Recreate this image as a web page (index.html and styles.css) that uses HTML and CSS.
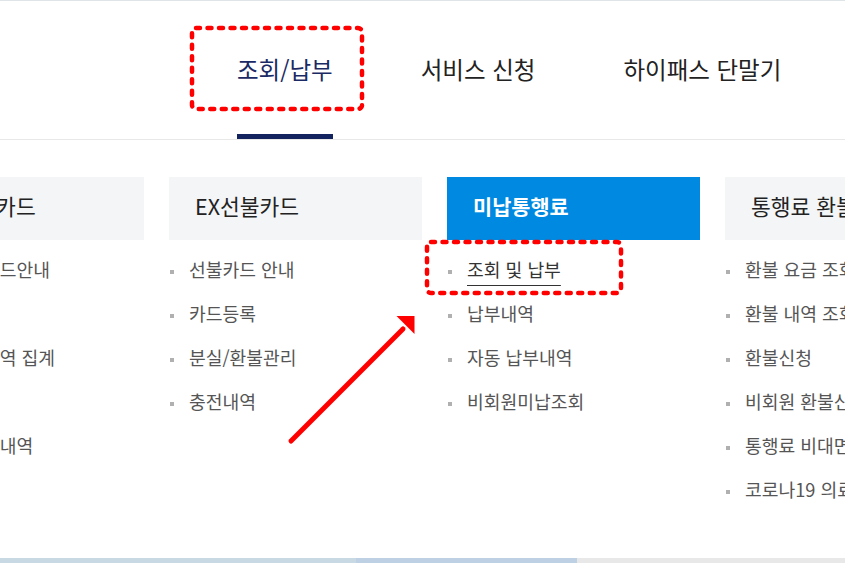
FILE: index.html
```html
<!DOCTYPE html>
<html lang="ko">
<head>
<meta charset="UTF-8">
<title>조회/납부</title>
<link rel="stylesheet" href="styles.css">
</head>
<body>
<div class="page">

	<div class="gnb">
		<ul class="gnb-menu">
			<li class="on"><a href="#">조회/납부</a></li>
			<li><a href="#">서비스 신청</a></li>
			<li><a href="#">하이패스 단말기</a></li>
		</ul>
	</div>

	<div class="sub-menu">
		<div class="col">
			<h3 class="col-title">하이패스카드</h3>
			<ul class="col-list">
				<li><a href="#">하이패스 카드안내</a></li>
				<li><a href="#">카드등록</a></li>
				<li><a href="#">카드 사용내역 집계</a></li>
				<li><a href="#">요금조회</a></li>
				<li><a href="#">통행료 충전내역</a></li>
			</ul>
		</div>
		<div class="col">
			<h3 class="col-title">EX선불카드</h3>
			<ul class="col-list">
				<li><a href="#">선불카드 안내</a></li>
				<li><a href="#">카드등록</a></li>
				<li><a href="#">분실/환불관리</a></li>
				<li><a href="#">충전내역</a></li>
			</ul>
		</div>
		<div class="col">
			<h3 class="col-title active">미납통행료</h3>
			<ul class="col-list">
				<li class="cur"><a href="#">조회 및 납부</a></li>
				<li><a href="#">납부내역</a></li>
				<li><a href="#">자동 납부내역</a></li>
				<li><a href="#">비회원미납조회</a></li>
			</ul>
		</div>
		<div class="col">
			<h3 class="col-title">통행료 환불</h3>
			<ul class="col-list">
				<li><a href="#">환불 요금 조회</a></li>
				<li><a href="#">환불 내역 조회</a></li>
				<li><a href="#">환불신청</a></li>
				<li><a href="#">비회원 환불신청</a></li>
				<li><a href="#">통행료 비대면 환불신청</a></li>
				<li><a href="#">코로나19 의료진 환불</a></li>
			</ul>
		</div>
	</div>

	<div class="bottom-band">
		<span class="band-a"></span>
		<span class="band-b"></span>
		<span class="band-c"></span>
	</div>

	<!-- annotation marks drawn over the menu -->
	<svg class="marks" width="845" height="563" viewBox="0 0 845 563">
		<rect class="dots" x="192" y="28" width="170" height="81" rx="4"/>
		<rect class="dots" x="427" y="242" width="194" height="51" rx="4"/>
		<line class="arrow-line" x1="291" y1="441" x2="403" y2="329"/>
		<polygon class="arrow-head" points="396.5,316 414.5,316 414.5,334"/>
	</svg>

</div>
</body>
</html>
```

FILE: styles.css
```css
html, body
{
	margin: 0;
	padding: 0;
	background: #ffffff;
}

body
{
	font-family: "Noto Sans CJK KR", "Noto Sans", sans-serif;
	color: #222222;
}

a
{
	color: inherit;
	text-decoration: none;
}

.page
{
	position: relative;
	width: 845px;
	height: 563px;
	overflow: hidden;
}

/* top menu */

.gnb
{
	border-top: 1px solid #dfe4e8;
	border-bottom: 1px solid #e8e8e8;
}

.gnb-menu
{
	display: flex;
	gap: 88px;
	margin: 0;
	padding: 0 0 0 237px;
	list-style: none;
}

.gnb-menu a
{
	display: block;
	padding: 53px 0 50px;
	line-height: 30px;
	font-size: 23.5px;
	color: #222222;
	border-bottom: 5px solid transparent;
	white-space: nowrap;
}

.gnb-menu .on a
{
	color: #1b2a64;
	border-bottom-color: #13235f;
}

/* sub menu columns */

.sub-menu
{
	display: flex;
	gap: 25px;
	margin-left: -109px;
	padding-top: 37px;
}

.col
{
	flex: 0 0 253px;
}

.col-title
{
	margin: 0;
	padding: 0 0 5px 26px;
	line-height: 58px;
	font-size: 21.5px;
	font-weight: 400;
	color: #222222;
	background-color: #f4f5f7;
	white-space: nowrap;
}

.col-title.active
{
	font-size: 20.8px;
	font-weight: 700;
	color: #ffffff;
	background-color: #0089e0;
}

.col-list
{
	margin: 0;
	padding: 7px 0 0;
	list-style: none;
}

.col-list li
{
	padding: 10px 0;
	line-height: 24px;
	font-size: 18.2px;
	color: #555555;
	white-space: nowrap;
}

.col-list li::before
{
	content: "";
	display: inline-block;
	width: 4px;
	height: 4px;
	margin: 0 15px 0 1px;
	background-color: #b0b0b0;
	vertical-align: middle;
}

.col-list .cur a
{
	color: #333333;
	text-decoration: underline;
	text-decoration-thickness: 1px;
	text-underline-offset: 8px;
}

/* strip of the next section */

.bottom-band
{
	display: flex;
	height: 5px;
	margin-top: 47px;
}

.band-a
{
	width: 356px;
	background-color: #c9d9e3;
}

.band-b
{
	width: 221px;
	background-color: #bdd0e4;
}

.band-c
{
	flex: 1;
	background-color: #e8e8e8;
}

/* red annotation */

.marks
{
	position: absolute;
	top: 0;
	left: 0;
	pointer-events: none;
}

.dots
{
	fill: none;
	stroke: #ff0000;
	stroke-width: 4.5;
	stroke-dasharray: 4 7.5;
	stroke-linecap: round;
}

.arrow-line
{
	stroke: #ff0000;
	stroke-width: 5;
	stroke-linecap: round;
}

.arrow-head
{
	fill: #ff0000;
}
```
